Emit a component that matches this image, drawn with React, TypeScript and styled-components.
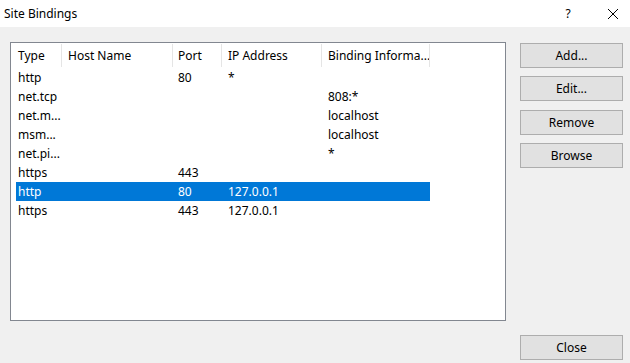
import React from "react";
import styled, { createGlobalStyle } from "styled-components";

const Global = createGlobalStyle`
  html, body { margin: 0; padding: 0; background: #f0f0f0; }
  body { font-family: "Noto Sans", "Segoe UI", sans-serif; font-size: 12px; color: #000; }
`;

const Window = styled.div`
  width: 630px;
  height: 363px;
  background: #f0f0f0;
  display: flex;
  flex-direction: column;
  overflow: hidden;
`;

const TitleBar = styled.div`
  height: 27px;
  background: #fff;
  display: flex;
  align-items: center;
  padding-left: 4px;
`;

const Title = styled.div`
  flex: 1;
  font-size: 12px;
`;

const TitleButton = styled.div<{ $w: number }>`
  width: ${(p) => p.$w}px;
  height: 27px;
  display: flex;
  align-items: center;
  justify-content: center;
`;

const Body = styled.div`
  display: flex;
  padding: 15px 7px 0 10px;
  gap: 14px;
`;

const ListBox = styled.div`
  height: 277px;
  width: 489px;
  border: 1px solid #828790;
  background: #fff;
  padding-left: 5px;
  box-sizing: content-box;
`;

const HeaderRow = styled.div`
  display: flex;
  height: 25px;
`;

const HeaderCell = styled.div<{ $w: number; $pad: number }>`
  width: ${(p) => p.$w}px;
  box-sizing: border-box;
  padding-left: ${(p) => p.$pad}px;
  display: flex;
  align-items: center;
  position: relative;
  white-space: nowrap;
  &::after {
    content: "";
    position: absolute;
    right: 0;
    top: 1px;
    bottom: 1px;
    width: 1px;
    background: #e5e5e5;
  }
`;

const Row = styled.div<{ $sel?: boolean }>`
  display: flex;
  height: 19px;
  width: 414px;
  background: ${(p) => (p.$sel ? "#0078d7" : "transparent")};
  color: ${(p) => (p.$sel ? "#fff" : "#000")};
`;

const Cell = styled.div<{ $w: number; $pad: number }>`
  width: ${(p) => p.$w}px;
  box-sizing: border-box;
  padding-left: ${(p) => p.$pad}px;
  display: flex;
  align-items: center;
  white-space: nowrap;
`;

const ButtonColumn = styled.div`
  display: flex;
  flex-direction: column;
  gap: 8px;
  padding-top: 1px;
`;

const Button = styled.button<{ $mt?: number }>`
  width: 103px;
  height: 25px;
  background: #e1e1e1;
  border: 1px solid #adadad;
  font-family: "Noto Sans", "Segoe UI", sans-serif;
  font-size: 12px;
  color: #000;
  padding: 0;
  margin: ${(p) => p.$mt ?? 0}px 0 0 0;
`;

const Footer = styled.div`
  display: flex;
  justify-content: flex-end;
  padding: 14px 7px 0 0;
`;

const cols = [
  { name: "Type", w: 46, pad: 2 },
  { name: "Host Name", w: 111, pad: 6 },
  { name: "Port", w: 49, pad: 5 },
  { name: "IP Address", w: 100, pad: 6 },
  { name: "Binding Informa...", w: 108, pad: 6 },
];

const rows: string[][] = [
  ["http", "", "80", "*", ""],
  ["net.tcp", "", "", "", "808:*"],
  ["net.m...", "", "", "", "localhost"],
  ["msm...", "", "", "", "localhost"],
  ["net.pi...", "", "", "", "*"],
  ["https", "", "443", "", ""],
  ["http", "", "80", "127.0.0.1", ""],
  ["https", "", "443", "127.0.0.1", ""],
];

export default function App() {
  return (
    <Window>
      <Global />
      <TitleBar>
        <Title>Site Bindings</Title>
        <TitleButton $w={56}>?</TitleButton>
        <TitleButton $w={34}>
          <svg width="12" height="12" viewBox="0 0 12 12">
            <path d="M1 1 L11 11 M11 1 L1 11" stroke="#000" strokeWidth="1" />
          </svg>
        </TitleButton>
      </TitleBar>
      <Body>
        <ListBox>
          <HeaderRow>
            {cols.map((c) => (
              <HeaderCell key={c.name} $w={c.w} $pad={c.pad}>
                {c.name}
              </HeaderCell>
            ))}
          </HeaderRow>
          {rows.map((r, i) => (
            <Row key={i} $sel={i === 6}>
              {r.map((v, j) => (
                <Cell key={j} $w={cols[j].w} $pad={cols[j].pad}>
                  {v}
                </Cell>
              ))}
            </Row>
          ))}
        </ListBox>
        <ButtonColumn>
          <Button>Add...</Button>
          <Button>Edit...</Button>
          <Button $mt={1}>Remove</Button>
          <Button>Browse</Button>
        </ButtonColumn>
      </Body>
      <Footer>
        <Button>Close</Button>
      </Footer>
    </Window>
  );
}
